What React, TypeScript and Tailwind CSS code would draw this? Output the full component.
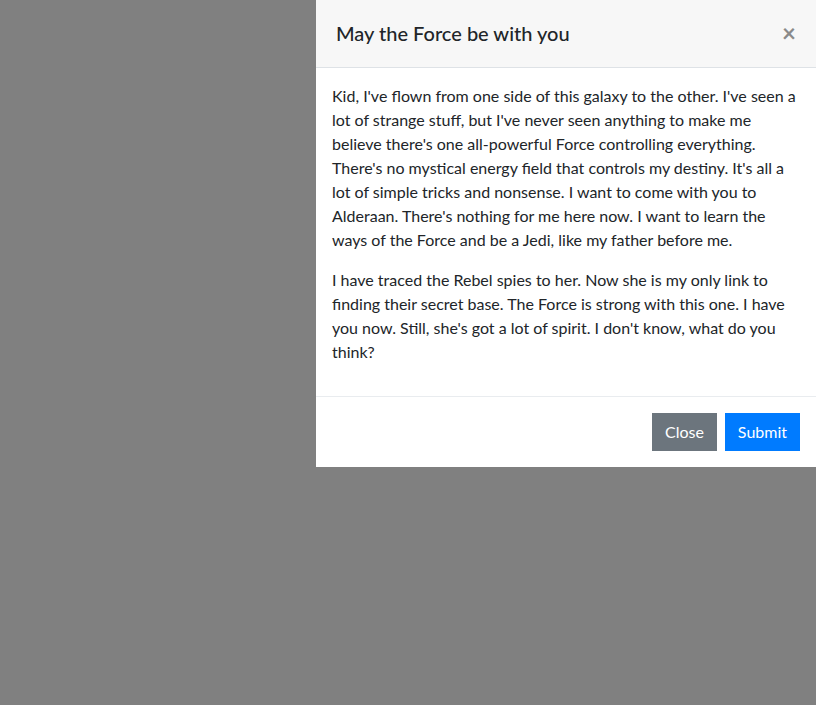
export default function App() {
  return (
    <div className="min-h-screen bg-[#808080] font-['Lato',sans-serif] text-[#212529]">
      <div className="ml-auto w-[500px] bg-white">
        {/* Header */}
        <div className="flex items-center justify-between border-b border-[#dee2e6] bg-[#f7f7f7] px-5 pt-[18px] pb-[19px]">
          <h5 className="text-[20px] leading-[30px] font-medium">May the Force be with you</h5>
          <button className="text-[24px] leading-none font-bold text-[#8a8a8a]">×</button>
        </div>

        {/* Body */}
        <div className="p-4 text-[16px] leading-6">
          <p className="mb-4">
            Kid, I've flown from one side of this galaxy to the other. I've seen a lot of strange stuff, but I've
            never seen anything to make me believe there's one all-powerful Force controlling everything. There's
            no mystical energy field that controls my destiny. It's all a lot of simple tricks and nonsense. I want
            to come with you to Alderaan. There's nothing for me here now. I want to learn the ways of the Force
            and be a Jedi, like my father before me.
          </p>
          <p className="mb-4">
            I have traced the Rebel spies to her. Now she is my only link to finding their secret base. The Force
            is strong with this one. I have you now. Still, she's got a lot of spirit. I don't know, what do you
            think?
          </p>
        </div>

        {/* Footer */}
        <div className="flex justify-end gap-2 border-t border-[#e9ecef] p-4">
          <button className="h-[38px] bg-[#6c757d] px-[13px] text-[16px] text-white">Close</button>
          <button className="h-[38px] bg-[#007bff] px-[13px] text-[16px] text-white">Submit</button>
        </div>
      </div>
    </div>
  );
}
